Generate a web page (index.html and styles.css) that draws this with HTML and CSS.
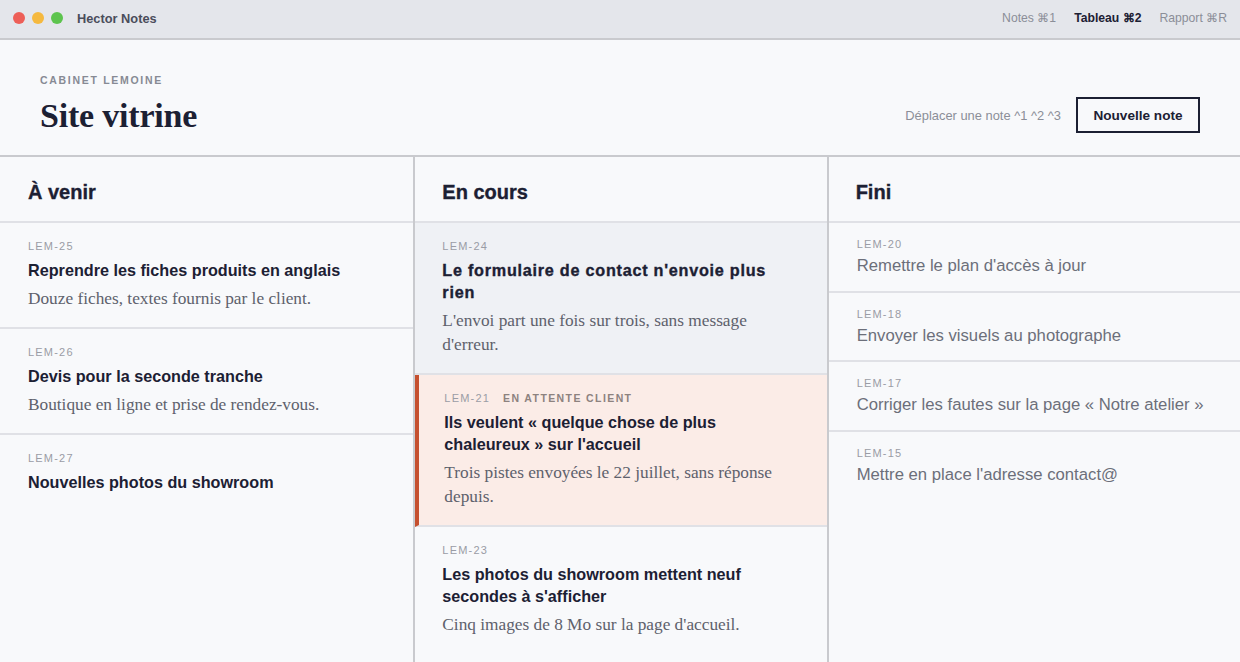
FILE: index.html
```html
<!DOCTYPE html>
<html lang="fr">
<head>
<meta charset="utf-8">
<title>Hector Notes</title>
<link rel="stylesheet" href="styles.css">
</head>
<body>
<div class="app">
  <div class="titlebar">
    <div class="lights">
      <span class="light red"></span>
      <span class="light yellow"></span>
      <span class="light green"></span>
    </div>
    <div class="appname">Hector Notes</div>
    <nav class="nav">
      <span class="nav-item">Notes ⌘1</span>
      <span class="nav-item active">Tableau ⌘2</span>
      <span class="nav-item">Rapport ⌘R</span>
    </nav>
  </div>

  <header class="header">
    <div class="header-left">
      <div class="eyebrow">CABINET LEMOINE</div>
      <h1 class="title">Site vitrine</h1>
    </div>
    <div class="header-right">
      <span class="hint">Déplacer une note ^1 ^2 ^3</span>
      <button class="btn">Nouvelle note</button>
    </div>
  </header>

  <main class="board">
    <section class="column">
      <h2 class="col-head">À venir</h2>
      <article class="card">
        <div class="meta"><span class="id">LEM-25</span></div>
        <h3 class="card-title">Reprendre les fiches produits en anglais</h3>
        <p class="card-desc">Douze fiches, textes fournis par le client.</p>
      </article>
      <article class="card">
        <div class="meta"><span class="id">LEM-26</span></div>
        <h3 class="card-title">Devis pour la seconde tranche</h3>
        <p class="card-desc">Boutique en ligne et prise de rendez-vous.</p>
      </article>
      <article class="card no-border">
        <div class="meta"><span class="id">LEM-27</span></div>
        <h3 class="card-title">Nouvelles photos du showroom</h3>
      </article>
    </section>

    <section class="column">
      <h2 class="col-head">En cours</h2>
      <article class="card selected">
        <div class="meta"><span class="id">LEM-24</span></div>
        <h3 class="card-title strong">Le formulaire de contact n'envoie plus rien</h3>
        <p class="card-desc">L'envoi part une fois sur trois, sans message d'erreur.</p>
      </article>
      <article class="card waiting">
        <div class="meta"><span class="id">LEM-21</span><span class="tag">EN ATTENTE CLIENT</span></div>
        <h3 class="card-title">Ils veulent « quelque chose de plus chaleureux » sur l'accueil</h3>
        <p class="card-desc">Trois pistes envoyées le 22 juillet, sans réponse depuis.</p>
      </article>
      <article class="card no-border">
        <div class="meta"><span class="id">LEM-23</span></div>
        <h3 class="card-title">Les photos du showroom mettent neuf secondes à s'afficher</h3>
        <p class="card-desc">Cinq images de 8 Mo sur la page d'accueil.</p>
      </article>
    </section>

    <section class="column">
      <h2 class="col-head">Fini</h2>
      <article class="card done">
        <div class="meta"><span class="id">LEM-20</span></div>
        <h3 class="card-title">Remettre le plan d'accès à jour</h3>
      </article>
      <article class="card done">
        <div class="meta"><span class="id">LEM-18</span></div>
        <h3 class="card-title">Envoyer les visuels au photographe</h3>
      </article>
      <article class="card done">
        <div class="meta"><span class="id">LEM-17</span></div>
        <h3 class="card-title">Corriger les fautes sur la page « Notre atelier »</h3>
      </article>
      <article class="card done no-border">
        <div class="meta"><span class="id">LEM-15</span></div>
        <h3 class="card-title">Mettre en place l'adresse contact@</h3>
      </article>
    </section>
  </main>
</div>
</body>
</html>
```

FILE: styles.css
```css
* { box-sizing: border-box; }

html, body {
  margin: 0;
  padding: 0;
  height: 100%;
  overflow: hidden;
}

body {
  background: #f8f9fb;
  color: #1c2033;
  font-family: "Liberation Sans", Arial, sans-serif;
}

.app {
  display: flex;
  flex-direction: column;
  height: 662px;
}

/* Title bar */
.titlebar {
  height: 40px;
  flex: none;
  display: flex;
  align-items: center;
  padding: 0 13px 2px 13px;
  background: #e4e6eb;
  border-bottom: 2px solid #c9cace;
}

.lights {
  display: flex;
  gap: 7px;
}

.light {
  width: 12px;
  height: 12px;
  border-radius: 50%;
  display: block;
}
.light.red { background: #ed5f58; }
.light.yellow { background: #f5b93f; }
.light.green { background: #5dc44e; }

.appname {
  margin-left: 14px;
  font-size: 12.8px;
  font-weight: 700;
  color: #4a4d5b;
}

.nav {
  margin-left: auto;
  display: flex;
  gap: 18px;
  font-size: 12.2px;
  color: #8b8e98;
}

.nav-item.active {
  color: #1c2033;
  font-weight: 700;
}

/* Header */
.header {
  flex: none;
  height: 117px;
  display: flex;
  justify-content: space-between;
  align-items: flex-end;
  padding: 0 40px 19px 40px;
  border-bottom: 2px solid #c9cace;
}

.eyebrow {
  font-size: 10.5px;
  font-weight: 700;
  letter-spacing: 1.7px;
  line-height: 14px;
  color: #878a94;
}

.title {
  margin: 9px 0 0 0;
  font-family: "Liberation Serif", "Times New Roman", serif;
  font-weight: 700;
  font-size: 34px;
  line-height: 40px;
  color: #1c2033;
  letter-spacing: -0.2px;
}

.header-right {
  display: flex;
  align-items: center;
  gap: 15px;
  margin-bottom: 3px;
}

.hint {
  font-size: 12.9px;
  color: #8b8e98;
}

.btn {
  font-family: "Liberation Sans", Arial, sans-serif;
  font-size: 13.6px;
  font-weight: 700;
  color: #1c2033;
  background: #f8f9fb;
  border: 2px solid #1c2033;
  height: 36px;
  width: 124px;
  padding: 0;
}

/* Board */
.board {
  flex: 1;
  display: grid;
  grid-template-columns: 1fr 1fr 1fr;
  min-height: 0;
}

.column {
  display: flex;
  flex-direction: column;
  min-width: 0;
}

.column + .column {
  border-left: 2px solid #c9cace;
}

.col-head {
  margin: 0;
  height: 66px;
  padding: 23px 28px 0 27px;
  font-size: 20px;
  line-height: 24px;
  font-weight: 700;
  color: #1c2033;
  -webkit-text-stroke: 0.35px #1c2033;
  border-bottom: 2px solid #e0e1e6;
}

.card {
  padding: 16px 28px 16px 27px;
  border-bottom: 2px solid #e0e1e6;
}

.column:first-child .col-head,
.column:first-child .card {
  padding-left: 28px;
}

.card.no-border { border-bottom: none; }

.card.selected {
  background: #eff1f5;
}

.card.waiting {
  background: #fbece7;
  border-left: 4px solid #c5502f;
  padding-left: 25px;
}

.meta {
  display: flex;
  gap: 13px;
  font-size: 11px;
  line-height: 14px;
  letter-spacing: 1.2px;
  color: #9a9ca5;
}

.tag {
  font-weight: 700;
  font-size: 10.5px;
  color: #8d827f;
  letter-spacing: 1.4px;
}

.card-title {
  margin: 6px 0 0 0;
  font-size: 16.2px;
  line-height: 22px;
  font-weight: 700;
  color: #1c2033;
}

.card-title.strong {
  letter-spacing: 0.75px;
  -webkit-text-stroke: 0.35px #1c2033;
}

.card-desc {
  margin: 6px 0 0 0;
  font-family: "Liberation Serif", "Times New Roman", serif;
  font-size: 17.3px;
  line-height: 24px;
  color: #5e616c;
}

.card.done {
  padding: 14px 28px 13.5px 28px;
}

.card.done .card-title {
  margin-top: 4px;
  font-size: 16.7px;
  font-weight: 400;
  color: #6c6f7a;
}
```
